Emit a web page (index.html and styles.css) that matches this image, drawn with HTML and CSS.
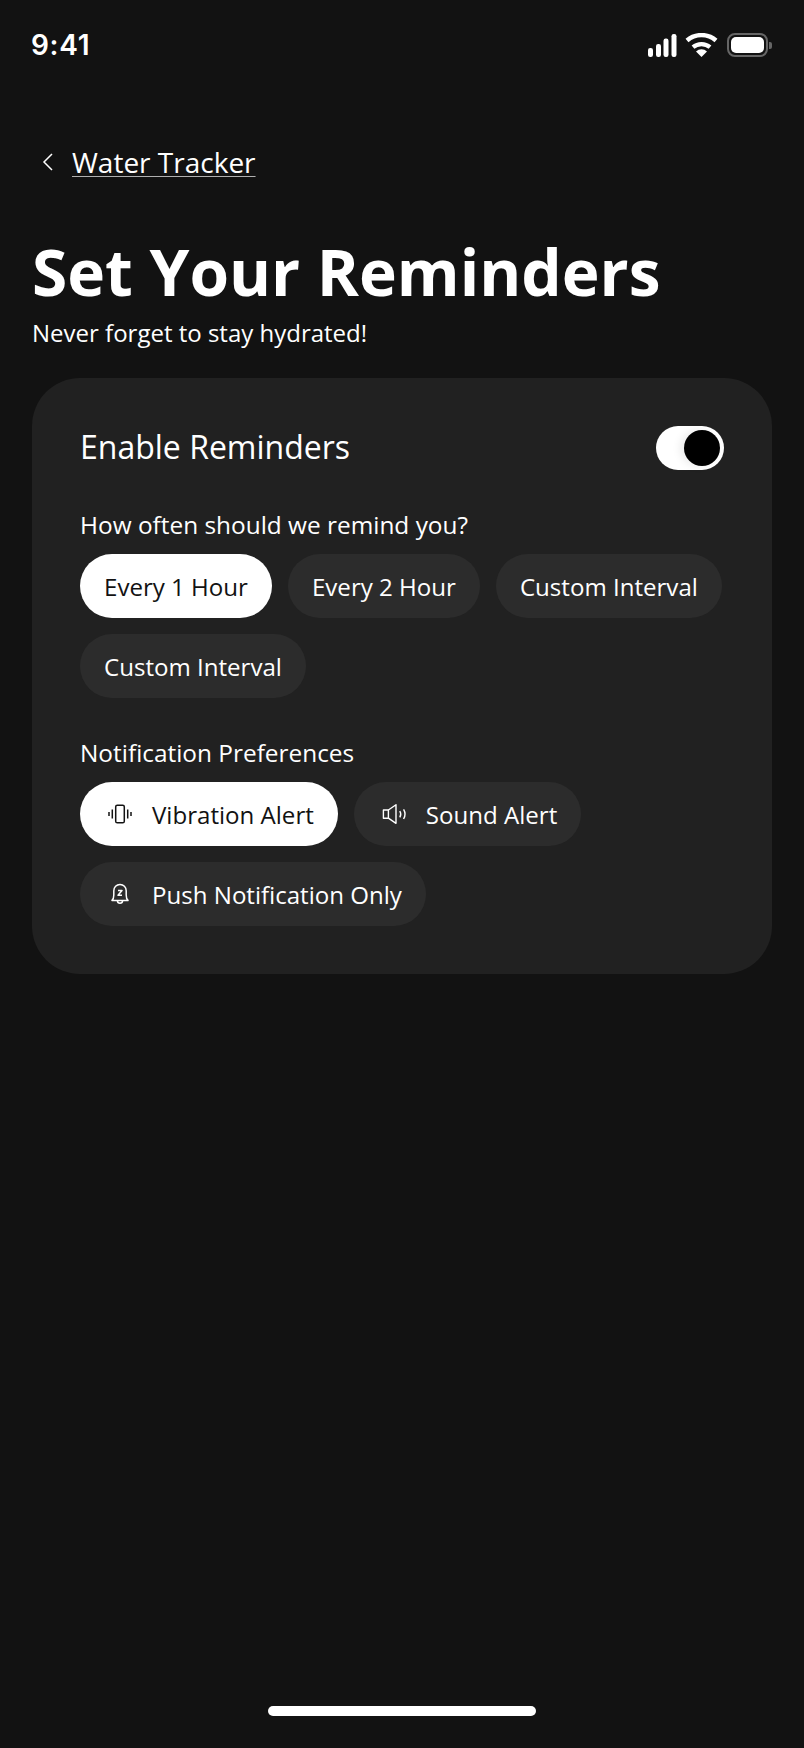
FILE: index.html
```html
<!DOCTYPE html>
<html lang="en">
<head>
<meta charset="utf-8">
<title>Set Your Reminders</title>
<link rel="stylesheet" href="styles.css">
</head>
<body>
<div class="screen">
  <header class="status">
    <span class="time">9:41</span>
    <div class="status-icons">
      <svg class="signal" width="29" height="23" viewBox="0 0 29 23" fill="#fff"><rect x="0" y="14" width="5" height="9" rx="2.2"/><rect x="8" y="10" width="5" height="13" rx="2.2"/><rect x="15.5" y="4.5" width="5" height="18.5" rx="2.2"/><rect x="23.5" y="0" width="5" height="23" rx="2.2"/></svg>
      <svg class="wifi" width="33" height="24" viewBox="0 0 33 24" fill="none" stroke="#fff"><path d="M2 7.5A22 22 0 0 1 31 7.5" stroke-width="4.4"/><path d="M8 14.2A13 13 0 0 1 25 14.2" stroke-width="4.2"/><path d="M16.5 24L11 18.5A8 8 0 0 1 22 18.5Z" fill="#fff" stroke="none"/></svg>
      <div class="battery"><div class="battery-body"><div class="battery-fill"></div></div><div class="battery-nub"></div></div>
    </div>
  </header>

  <nav class="back">
    <svg class="chevron" width="12" height="18" viewBox="0 0 12 18" fill="none" stroke="#fff" stroke-width="1.5"><path d="M10 1L2 9L10 17"/></svg>
    <a class="back-link">Water Tracker</a>
  </nav>

  <h1 class="title">Set Your Reminders</h1>
  <p class="subtitle">Never forget to stay hydrated!</p>

  <main class="card">
    <div class="enable-row">
      <span class="enable-label">Enable Reminders</span>
      <div class="toggle"><div class="knob"></div></div>
    </div>

    <section class="group">
      <h2 class="group-label">How often should we remind you?</h2>
      <div class="chips">
        <span class="chip active">Every 1 Hour</span>
        <span class="chip">Every 2 Hour</span>
        <span class="chip">Custom Interval</span>
        <span class="chip">Custom Interval</span>
      </div>
    </section>

    <section class="group">
      <h2 class="group-label">Notification Preferences</h2>
      <div class="chips">
        <span class="chip active">
          <svg class="icon" width="32" height="32" viewBox="0 0 32 32" fill="none" stroke="#121212" stroke-width="1.5"><rect x="11.7" y="7.2" width="8.6" height="17.6" rx="1.6"/><path d="M8.3 11.5V20.5M23.7 11.5V20.5M5 14V18M27 14V18"/></svg>
          Vibration Alert
        </span>
        <span class="chip">
          <svg class="icon" width="32" height="32" viewBox="0 0 32 32" fill="none" stroke="#fff" stroke-width="1.4" stroke-linejoin="round"><path d="M5.4 12H10.4V20.2H5.4Z"/><path d="M10.4 12L18 6.7V25.3L10.4 20.2"/><path d="M21.8 13C23 15 23 17.4 21.8 19.4"/><path d="M25.6 11.4C27.4 14.4 27.4 18 25.6 21"/></svg>
          Sound Alert
        </span>
        <span class="chip">
          <svg class="icon" width="32" height="32" viewBox="0 0 32 32" fill="none" stroke="#fff" stroke-width="1.5" stroke-linejoin="round"><path d="M8 22.4C9.6 21 9.8 19 9.8 17V12.8C9.8 9.2 12.5 6.4 16 6.4S22.2 9.2 22.2 12.8V17C22.2 19 22.4 21 24 22.4Z"/><path d="M13.4 22.6C13.6 26 18.4 26 18.6 22.6"/><path d="M14 12.4H18L14 17.2H18"/></svg>
          Push Notification Only
        </span>
      </div>
    </section>
  </main>

  <div class="home-indicator"></div>
</div>
</body>
</html>
```

FILE: styles.css
```css
* { box-sizing: border-box; }
html, body { margin: 0; padding: 0; background: #121212; }
.screen {
  width: 804px;
  height: 1748px;
  overflow: hidden;
  display: flex;
  flex-direction: column;
  padding: 0 32px;
  background: #121212;
  color: #fff;
  font-family: "Open Sans", sans-serif;
}
.status {
  height: 90px;
  flex: none;
  display: flex;
  justify-content: space-between;
  align-items: center;
}
.time {
  font-family: Inter, sans-serif;
  font-weight: 600;
  font-size: 28px;
  line-height: 1;
  letter-spacing: 0.7px;
  margin-left: -1px;
}
.status-icons { display: flex; align-items: center; gap: 8px; }
.wifi { margin-right: 1px; }
.battery { display: flex; align-items: center; gap: 1px; }
.battery-body {
  width: 41px;
  height: 24px;
  border: 2px solid #666;
  border-radius: 8px;
  padding: 2px;
}
.battery-fill { width: 100%; height: 100%; background: #fff; border-radius: 5px; }
.battery-nub { width: 3px; height: 7px; background: #666; border-radius: 0 2px 2px 0; }

.back {
  display: flex;
  align-items: center;
  gap: 18px;
  margin-top: 50px;
  padding-left: 10px;
}
.back-link {
  font-size: 28px;
  line-height: 44px;
  text-decoration: underline;
  text-decoration-color: #b0b0b0;
  text-decoration-thickness: 1px;
  text-underline-offset: 3px;
}
.title {
  margin: 44px 0 0;
  font-size: 64px;
  line-height: 88px;
  font-weight: 700;
}
.subtitle {
  margin: 0;
  font-size: 24px;
  line-height: 34px;
}
.card {
  margin-top: 28px;
  background: #212121;
  border-radius: 48px;
  padding: 48px;
}
.enable-row {
  display: flex;
  justify-content: space-between;
  align-items: center;
  height: 44px;
}
.enable-label { font-size: 32px; line-height: 44px; padding-bottom: 3px; }
.toggle {
  width: 68px;
  height: 44px;
  border-radius: 22px;
  background: #fff;
  display: flex;
  align-items: center;
  justify-content: flex-end;
  padding-right: 4px;
}
.knob {
  width: 36px;
  height: 36px;
  border-radius: 50%;
  background: #000;
  box-shadow: -4px 0 8px rgba(0, 0, 0, 0.08);
}
.group { margin-top: 37px; }
.group-label {
  margin: 0 0 11px;
  font-size: 24.4px;
  line-height: 36px;
  font-weight: 400;
}
.chips { display: flex; flex-wrap: wrap; gap: 16px; }
.chip {
  display: inline-flex;
  align-items: center;
  gap: 16px;
  height: 64px;
  padding: 0 24px;
  border-radius: 32px;
  background: #2c2c2c;
  font-size: 24.08px;
  white-space: nowrap;
}
.chip.active { background: #fff; color: #121212; }
.icon { flex: none; }
.home-indicator {
  flex: none;
  width: 268px;
  height: 10px;
  border-radius: 5px;
  background: #fff;
  margin: auto auto 32px;
}
```
